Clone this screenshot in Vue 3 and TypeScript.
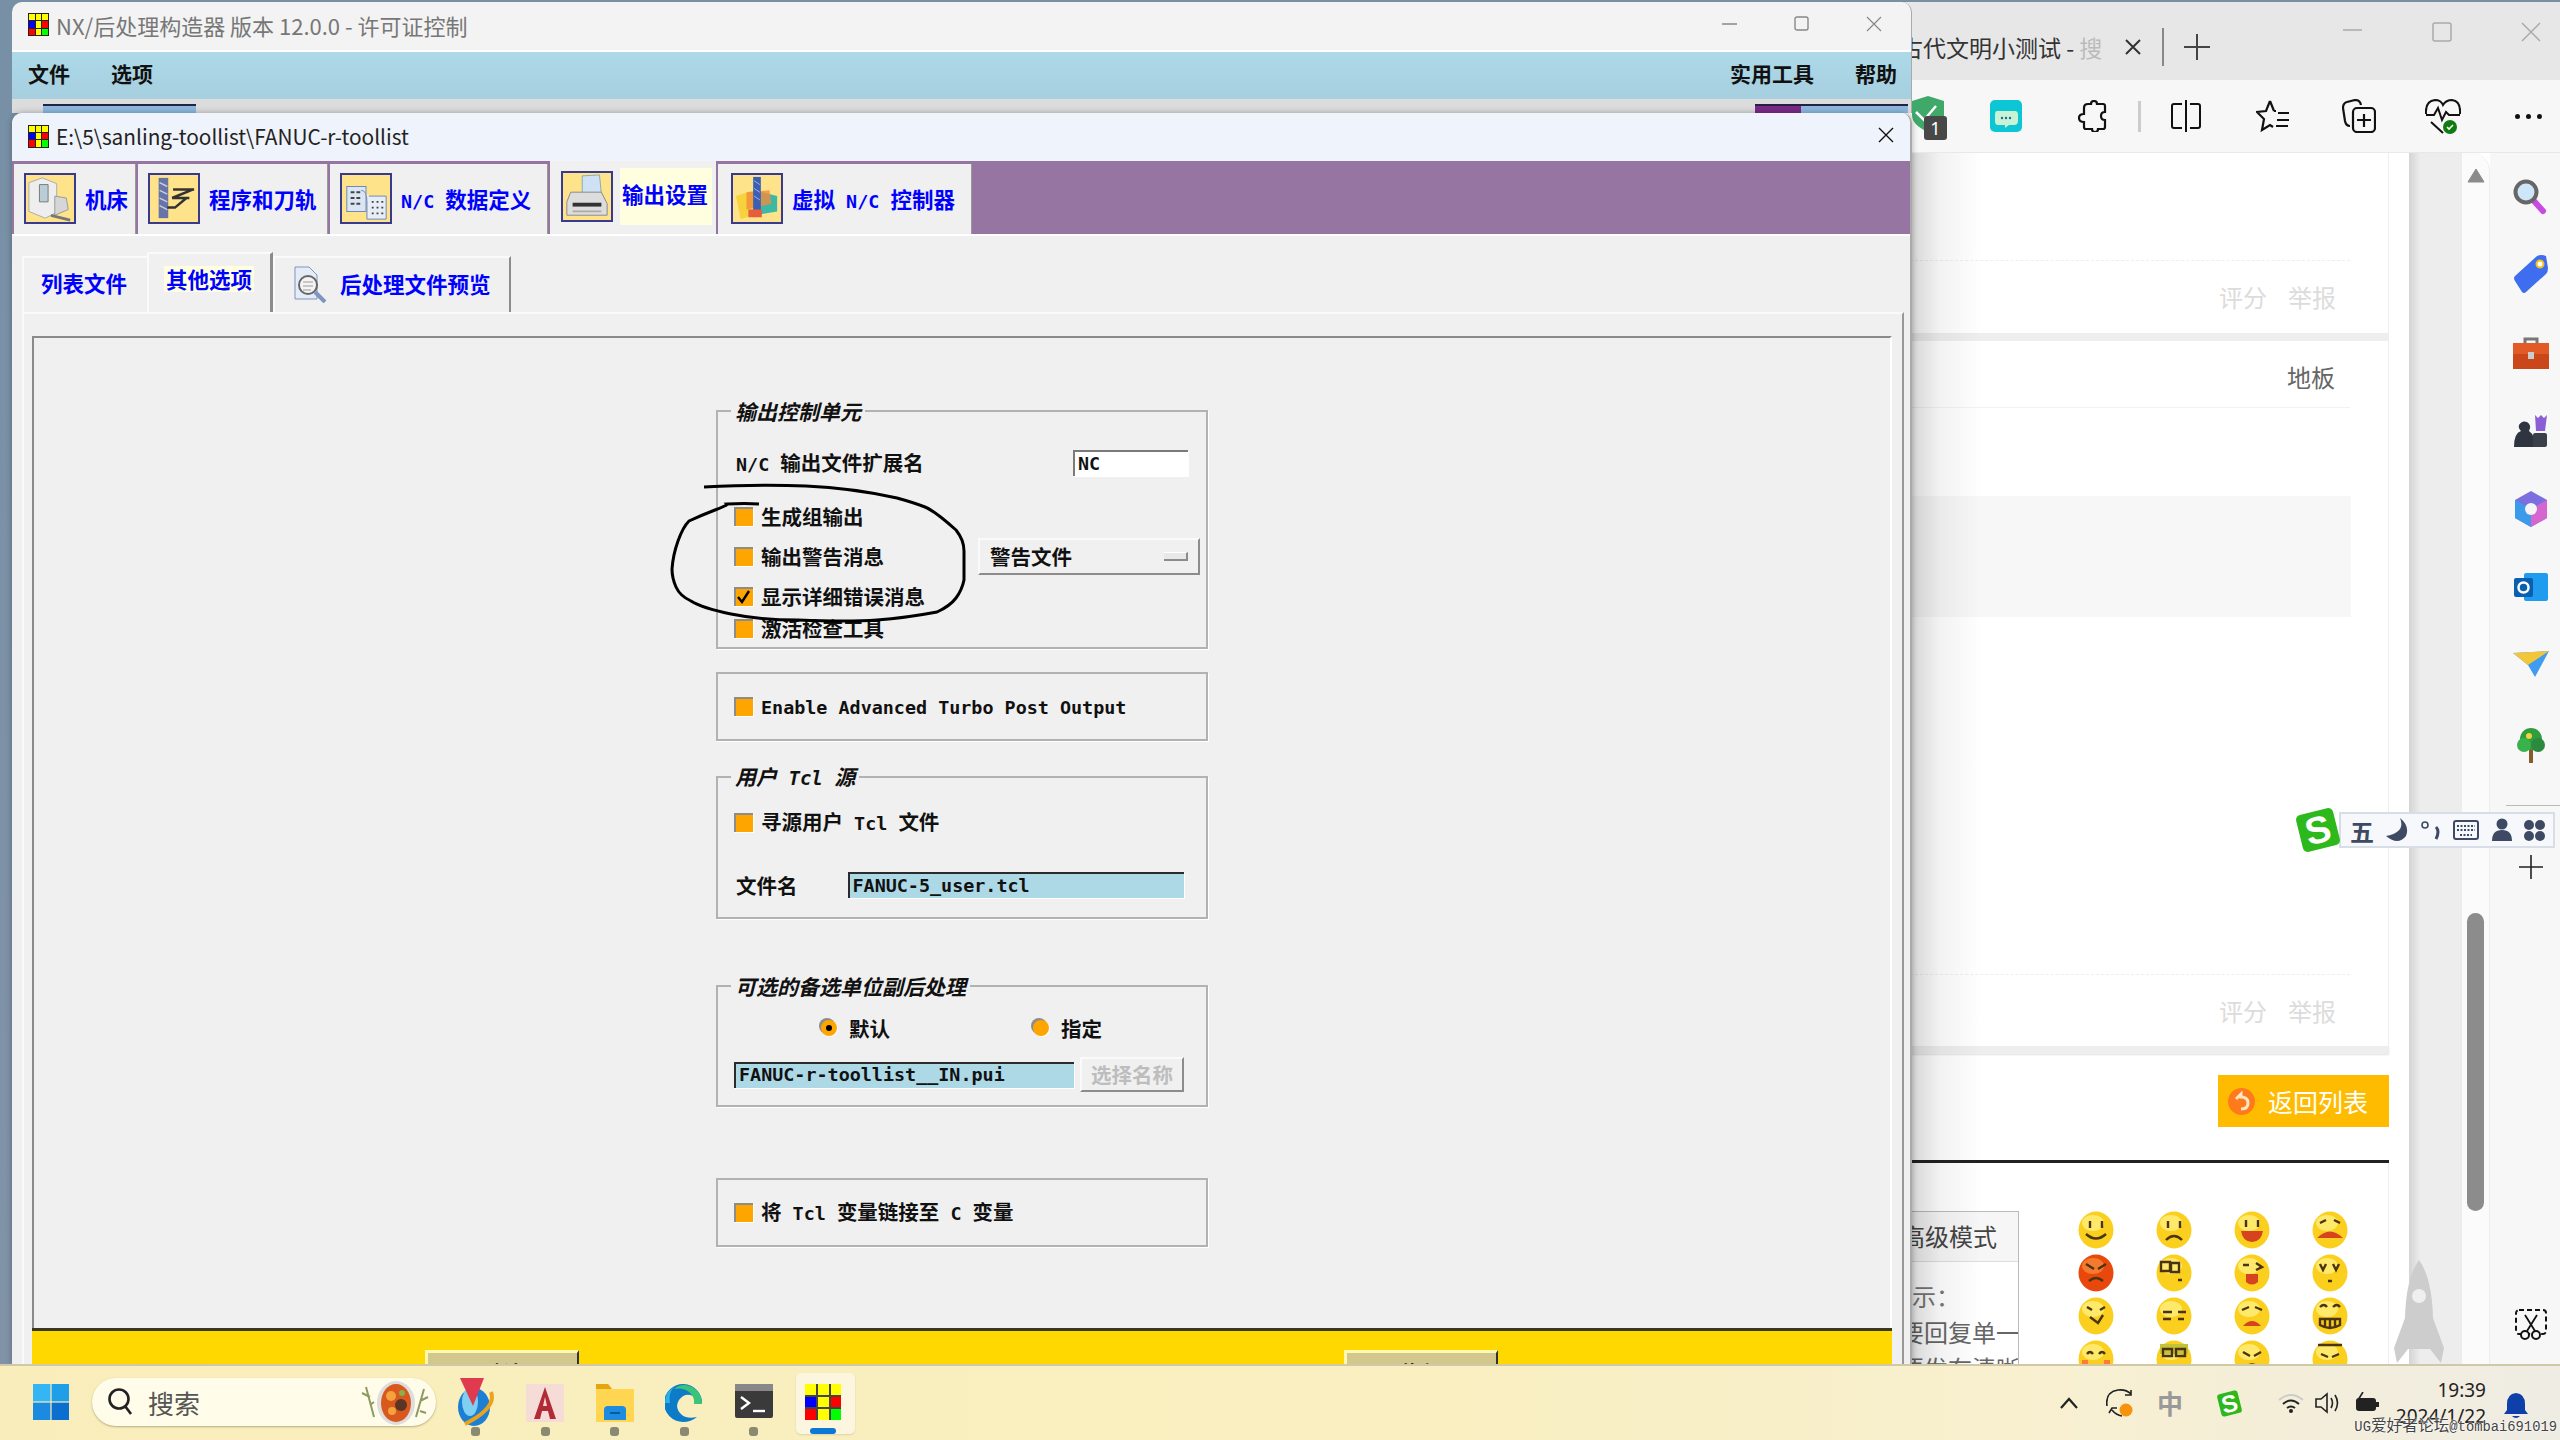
<script setup lang="ts">
const nxCells = ['#ff0', '#ff0', '#ff0', '#00f', '#ff0', '#f00', '#f00', '#ff0', '#0f0']

interface Emoji { d: string; m?: string; red?: boolean }
const emojis: Emoji[] = [
  { d: 'M12 10v7M24 10v7M8 23q10 9 20 0' },
  { d: 'M12 10v7M24 10v7M10 29q8-8 16 0' },
  { d: 'M12 9v7M24 9v7', m: 'M7 20h22q-2 11-11 11T7 20z' },
  { d: 'M8 12l6-3M22 9l6 3', m: 'M5 27q13-13 26 0z' },
  { d: 'M8 10l8 5M28 10l-8 5M11 27q7-6 14 0', red: true },
  { d: 'M5 8h9v9H5zM15 9h8v9h-8zM22 26h4' },
  { d: 'M9 11h6M22 9l6 4-6 3', m: 'M12 20h12v8q-6 5-12 0z' },
  { d: 'M8 10l3 6 3-6M21 10l3 6 3-6M16 27h4' },
  { d: 'M9 10l5 3M22 13l5-3M12 20l8 6 5-8' },
  { d: 'M7 15h9M22 15h8M7 22h8M22 22h6' },
  { d: 'M8 13l7-3M21 10l7 3', m: 'M9 29q9-10 18 0z' },
  { d: 'M8 10q4-4 7 0M21 10q4-4 7 0M8 22h20v6q-10 6-20 0zM13 22v7M18 22v8M23 22v7' },
  { d: 'M9 14q3-4 6 0M21 14q3-4 6 0', m: 'M4 20h6v5H4zM26 20h6v5h-6z' },
  { d: 'M7 9h9v7H7zM20 9h9v7h-9z', m: 'M4 4h28v10H4z' },
  { d: 'M9 12l7 4M27 12l-7 4M12 27q6-5 12 0' },
  { d: 'M6 5h24M9 14l7 3M27 14l-7 3M10 27l16 0' }
]
</script>

<template>
  <div class="desktop">
    <!-- browser behind -->
    <section class="browser">
      <header class="b-tabs">
        <span class="b-title">古代文明小测试 - <em>搜</em></span>
        <svg class="b-x" width="18" height="18" viewBox="0 0 18 18"><path d="M2 2l14 14M16 2L2 16" stroke="#333" stroke-width="2"/></svg>
        <i class="b-sep"></i>
        <svg class="b-plus" width="28" height="28" viewBox="0 0 28 28"><path d="M14 1v26M1 14h26" stroke="#444" stroke-width="2"/></svg>
        <div class="b-ctrls">
          <svg width="20" height="20" viewBox="0 0 20 20"><path d="M0 8h19" stroke="#aaa" stroke-width="1.5"/></svg>
          <svg width="20" height="20" viewBox="0 0 20 20"><rect x="1" y="1" width="18" height="18" rx="2" fill="none" stroke="#aaa" stroke-width="1.5"/></svg>
          <svg width="20" height="20" viewBox="0 0 20 20"><path d="M1 1l18 18M19 1L1 19" stroke="#aaa" stroke-width="1.5"/></svg>
        </div>
      </header>
      <nav class="b-tools">
        <div class="shield">
          <svg width="34" height="36" viewBox="0 0 34 36"><path d="M0 5l16-5 16 5v14q0 10-16 17Q0 29 0 19z" fill="#3fa96a"/><path d="M4 16l8 8 12-14" fill="none" stroke="#fff" stroke-width="2.5"/></svg>
          <b class="badge">1</b>
        </div>
        <svg class="t-chat" width="32" height="32" viewBox="0 0 32 32"><rect width="32" height="32" rx="5" fill="#0cc6d6"/><path d="M7 11h18q3 0 3 4v6q0 4-4 4h-5l-4 3v-3H8q-3 0-3-4v-6q0-4 2-4z" fill="#c8f3d4"/><circle cx="12" cy="18" r="1.2" fill="#26a"/><circle cx="16" cy="18" r="1.2" fill="#26a"/><circle cx="20" cy="18" r="1.2" fill="#26a"/></svg>
        <svg class="t-puz" width="30" height="32" viewBox="0 0 30 32"><path d="M11 4h3q0-3 3-3t3 3h6q2 0 2 2v6q-4 0-4 4t4 4v7q0 2-2 2h-5q0 3-3 3t-3-3H9q-2 0-2-2v-5q-5 0-5-4t5-4V8q0-4 4-4z" fill="none" stroke="#111" stroke-width="2.2"/></svg>
        <i class="t-sep"></i>
        <svg class="t-split" width="32" height="34" viewBox="0 0 32 34"><path d="M12 5H4Q2 5 2 7v20q0 2 2 2h8M20 5h8q2 0 2 2v20q0 2-2 2h-8M16 1v32" fill="none" stroke="#111" stroke-width="2"/></svg>
        <svg class="t-fav" width="34" height="34" viewBox="0 0 34 34"><path d="M14 2l4 10M14 2l-4 10-9 1 7 7-2 11 8-5 3 2M18 12h2M22 14h11M21 21h12M20 27h12" fill="none" stroke="#111" stroke-width="2.2"/></svg>
        <svg class="t-col" width="34" height="34" viewBox="0 0 34 34"><path d="M8 27Q4 27 3 22L1 9q0-5 4-6l8-2q5 0 6 5" fill="none" stroke="#111" stroke-width="2.2"/><rect x="11" y="9" width="22" height="24" rx="4" fill="none" stroke="#111" stroke-width="2.2"/><path d="M22 15v13M15 21h14" stroke="#111" stroke-width="2.2"/></svg>
        <svg class="t-heart" width="36" height="36" viewBox="0 0 36 36"><path d="M1 16Q0 3 10 2q6 0 8 5 3-5 9-5 9 1 8 14M1 17h8l4-7 4 12 4-8 3 3h11M6 24l12 11" fill="none" stroke="#111" stroke-width="2"/><circle cx="25" cy="29" r="7" fill="#107c10"/><path d="M22 29l2 2 4-4" fill="none" stroke="#fff" stroke-width="1.6"/></svg>
        <span class="t-dots"><i></i><i></i><i></i></span>
      </nav>
      <div class="b-main">
        <div class="page">
          <div class="fade"></div>
          <div class="post one">
            <div class="acts dotted"><span>评分</span><span>举报</span></div>
          </div>
          <div class="band"></div>
          <div class="post two">
            <div class="floor"><span>地板</span></div>
            <div class="quote"></div>
            <div class="acts dotted late"><span>评分</span><span>举报</span></div>
          </div>
          <div class="band last"></div>
          <div class="backrow">
            <a class="back-btn">
              <svg width="27" height="27" viewBox="0 0 27 27"><circle cx="13.5" cy="13.5" r="13.5" fill="#ff7a1a"/><path d="M8 11l5-5v3q7 0 7 6t-7 6" fill="none" stroke="#ffe7c8" stroke-width="3"/></svg>
              <span>返回列表</span>
            </a>
          </div>
          <div class="reply">
            <div class="mode">
              <div class="mode-head">高级模式</div>
              <p>示：</p>
              <p class="dark">要回复单一</p>
              <p class="dark">要发布清晰</p>
            </div>
            <div class="emojis">
              <svg v-for="(e, i) in emojis" :key="i" width="36" height="38" viewBox="0 0 36 38">
                <ellipse cx="18" cy="19" rx="17.5" ry="18.5" :fill="e.red ? '#e8480c' : '#fbcf1e'"/>
                <ellipse cx="15" cy="12" rx="11" ry="8" :fill="e.red ? '#f47a30' : '#ffe96a'"/>
                <path v-if="e.m" :d="e.m" :fill="i === 13 ? '#c5c23a' : i === 12 ? '#ff7a3a' : '#d8431f'"/>
                <path :d="e.d" fill="none" stroke="#4a3510" stroke-width="2.4"/>
              </svg>
            </div>
          </div>
        </div>
        <div class="gutter"></div>
        <div class="scroller">
          <svg width="18" height="15" viewBox="0 0 18 15"><path d="M9 1l8 13H1z" fill="#8b8b8b" stroke="#8b8b8b" stroke-linejoin="round"/></svg>
          <div class="thumb"></div>
        </div>
        <aside class="side">
          <svg width="36" height="36" viewBox="0 0 36 36"><path d="M21 22l9 10" stroke="#c74be0" stroke-width="6" stroke-linecap="round"/><circle cx="13" cy="13" r="10.5" fill="#cfe6f8" stroke="#666" stroke-width="4"/></svg>
          <svg width="36" height="40" viewBox="0 0 36 40"><path d="M2 22L24 2q4-2 9 0l2 12q0 4-2 6L13 38q-2 2-4 0L2 27q-2-3 0-5z" fill="#3f6df0"/><circle cx="27" cy="10" r="3.5" fill="#fff" stroke="#f2c21a" stroke-width="2"/></svg>
          <svg width="36" height="34" viewBox="0 0 36 34"><path d="M12 7V2h12v5" fill="none" stroke="#777" stroke-width="3"/><rect y="6" width="36" height="12" fill="#e25a26"/><rect y="17" width="36" height="15" fill="#c9471a"/><rect x="15" y="15" width="6" height="7" fill="#ccc"/></svg>
          <svg width="36" height="36" viewBox="0 0 36 36"><path d="M1 34q0-14 7-16-3-3-2-6 3-5 8-3 5 3 2 9 6 4 6 16z" fill="#2e3440"/><path d="M22 2l3 3 3-3 3 3 3-3-2 16H23z" fill="#8a5fd6"/><rect x="20" y="20" width="14" height="14" rx="2" fill="#3b3f49"/></svg>
          <svg width="34" height="36" viewBox="0 0 34 36"><path d="M17 0l16 9v18l-16 9L1 27V9z" fill="#7b6fe0"/><path d="M1 9l16 9v18L1 27z" fill="#3b9bea"/><path d="M33 9L17 18v18l16-9z" fill="#d566cf"/><circle cx="17" cy="18" r="6" fill="#f4f4f4"/></svg>
          <svg width="34" height="32" viewBox="0 0 34 32"><rect x="10" y="2" width="24" height="28" rx="2" fill="#1f9cf0"/><rect y="7" width="19" height="19" rx="2" fill="#0a5fb0"/><circle cx="9.5" cy="16.5" r="5" fill="none" stroke="#fff" stroke-width="2.5"/></svg>
          <svg width="36" height="26" viewBox="0 0 36 26"><path d="M0 2l36-2-14 26-7-12z" fill="#3f9cf0"/><path d="M0 2l15 12 21-14z" fill="#f3c63a"/></svg>
          <svg width="32" height="36" viewBox="0 0 32 36"><path d="M14 22h4v14h-4z" fill="#8a5a2b"/><circle cx="16" cy="12" r="11" fill="#2f9e3e"/><circle cx="9" cy="18" r="7" fill="#37b24d"/><circle cx="23" cy="18" r="7" fill="#2b8a3e"/><circle cx="14" cy="9" r="3" fill="#f2d13a"/></svg>
          <hr />
          <svg class="s-plus" width="24" height="24" viewBox="0 0 24 24"><path d="M12 0v24M0 12h24" stroke="#222" stroke-width="1.6"/></svg>
          <svg class="s-snip" width="32" height="32" viewBox="0 0 32 32"><rect x="1" y="1" width="30" height="24" rx="3" fill="none" stroke="#111" stroke-width="2" stroke-dasharray="5 3"/><path d="M10 6l10 16M22 6L12 22" stroke="#111" stroke-width="1.8"/><circle cx="10" cy="26" r="4" fill="#f7f7f7" stroke="#111" stroke-width="2"/><circle cx="21" cy="26" r="4" fill="#f7f7f7" stroke="#111" stroke-width="2"/></svg>
        </aside>
        <svg class="rocket" width="50" height="105" viewBox="0 0 50 105"><path d="M25 0q13 18 14 58l11 30-3 15-11-14H14L3 103 0 88l11-30Q12 18 25 0z" fill="#cdcdcd"/><circle cx="25" cy="36" r="7" fill="#efefef"/></svg>
      </div>
    </section>

    <!-- sogou IME bar -->
    <div class="ime">
      <div class="ime-s"><span>S</span></div>
      <div class="ime-bar">
        <b>五</b>
        <svg width="22" height="24" viewBox="0 0 22 24"><path d="M14 0q6 14-14 18 12 10 20 0 4-10-6-18z" fill="#3e4a63"/></svg>
        <svg width="20" height="22" viewBox="0 0 20 22"><circle cx="4" cy="6" r="3" fill="none" stroke="#3e4a63" stroke-width="1.6"/><path d="M15 8q4 4 0 12" fill="none" stroke="#3e4a63" stroke-width="3"/></svg>
        <svg width="26" height="20" viewBox="0 0 26 20"><rect x="1" y="1" width="24" height="18" rx="2" fill="none" stroke="#3e4a63" stroke-width="2"/><path d="M4 6h18M4 10h18M7 15h12" stroke="#3e4a63" stroke-width="2" stroke-dasharray="2 1.5"/></svg>
        <svg width="20" height="24" viewBox="0 0 20 24"><circle cx="10" cy="6" r="5.5" fill="#3e4a63"/><path d="M0 23q0-11 10-11t10 11z" fill="#3e4a63"/></svg>
        <svg width="21" height="21" viewBox="0 0 21 21"><g fill="#3e4a63"><circle cx="5" cy="5" r="5"/><circle cx="16" cy="5" r="5"/><circle cx="5" cy="16" r="5"/><circle cx="16" cy="16" r="5"/></g></svg>
      </div>
    </div>

    <!-- NX main window -->
    <section class="nx-main">
      <header class="nx-title">
        <div class="nx-logo"><i v-for="(c, i) in nxCells" :key="i" :style="{ background: c }"></i></div>
        <span>NX/后处理构造器 版本 12.0.0 - 许可证控制</span>
        <div class="nx-ctrls">
          <svg width="16" height="16" viewBox="0 0 16 16"><path d="M0 8h15" stroke="#888" stroke-width="1.4"/></svg>
          <svg width="16" height="16" viewBox="0 0 16 16"><rect x="1" y="1" width="13" height="13" rx="2" fill="none" stroke="#888" stroke-width="1.4"/></svg>
          <svg width="16" height="16" viewBox="0 0 16 16"><path d="M1 1l14 14M15 1L1 15" stroke="#888" stroke-width="1.2"/></svg>
        </div>
      </header>
      <div class="nx-menu">
        <span>文件</span><span>选项</span>
        <span class="push">实用工具</span><span>帮助</span>
      </div>
      <div class="nx-strip">
        <div class="frag"></div>
        <div class="frag right"></div>
      </div>
    </section>

    <!-- post builder window -->
    <section class="pb">
      <header class="pb-title">
        <div class="nx-logo"><i v-for="(c, i) in nxCells" :key="i" :style="{ background: c }"></i></div>
        <span>E:\5\sanling-toollist\FANUC-r-toollist</span>
        <svg class="pb-x" width="16" height="16" viewBox="0 0 16 16"><path d="M1 1l14 14M15 1L1 15" stroke="#111" stroke-width="1.4"/></svg>
      </header>

      <div class="pb-tabs">
        <div class="tab t1">
          <div class="ico"><svg viewBox="0 0 50 49"><path d="M3 8l14-5 15 6v30l-12 6L3 38z" fill="#eee" stroke="#aaa"/><path d="M14 10h9v18h-9z" fill="#b9cdd6" stroke="#777"/><path d="M30 22l12 2 2 12-14 6z" fill="#d6d6d6" stroke="#999"/><path d="M26 42l20 5" stroke="#777" stroke-width="3"/></svg></div>
          <span>机床</span>
        </div>
        <div class="tab t2">
          <div class="ico"><svg viewBox="0 0 50 49"><rect x="9" y="3" width="10" height="42" fill="#6674a8"/><path d="M10 8l8 4M10 16l8 4M10 24l8 4M10 32l8 4" stroke="#ccd" stroke-width="1.5"/><path d="M24 15h22M23 24l22-9M23 24h18M38 24l-12 10h-8" fill="none" stroke="#333" stroke-width="2.6"/></svg></div>
          <span>程序和刀轨</span>
        </div>
        <div class="tab t3">
          <div class="ico"><svg viewBox="0 0 50 49"><rect x="5" y="12" width="20" height="26" fill="#dbe6f5" stroke="#6c86b8"/><path d="M20 16q6 0 6 12v18h20V22H28" fill="#e8eef8" stroke="#6c86b8"/><path d="M9 18h4M15 18h4M9 24h4M15 24h4M9 30h4M15 30h4M31 28h2M36 28h2M41 28h2M31 34h2M36 34h2M41 34h2M31 40h2M36 40h2M41 40h2" stroke="#444" stroke-width="2"/></svg></div>
          <span><span class="lat">N/C </span>数据定义</span>
        </div>
        <div class="tab t4">
          <div class="ico"><svg viewBox="0 0 50 49"><path d="M20 3l18-1 2 20H20z" fill="#cfe1f4" stroke="#8aa"/><path d="M8 20h32l6 12v12H4V30z" fill="#ddd" stroke="#888"/><rect x="10" y="31" width="30" height="4" fill="#333"/><path d="M10 40h30" stroke="#aaa" stroke-width="2"/></svg></div>
          <span class="lit">输出设置</span>
        </div>
        <div class="tab t5">
          <div class="ico"><svg viewBox="0 0 50 49"><path d="M3 22l19-6v26L8 46z" fill="#f6d23c"/><path d="M22 16l24 6v16L22 42z" fill="#3db8a6"/><path d="M14 18l24-2 2 14-26 6z" fill="#f38b3c" opacity=".8"/><rect x="21" y="2" width="8" height="36" fill="#3b5fb5"/><path d="M22 6l6 4M22 14l6 4M22 22l6 4" stroke="#9fb5e0"/><path d="M16 36h14v8H16z" fill="#e85c3c"/></svg></div>
          <span>虚拟<span class="lat"> N/C </span>控制器</span>
        </div>
      </div>

      <div class="pb-subtabs">
        <div class="sub s1">列表文件</div>
        <div class="sub s2"><span>其他选项</span></div>
        <div class="sub s3">
          <svg width="36" height="38" viewBox="0 0 36 38"><path d="M2 2h14l8 8v24H2z" fill="#e4ecf7" stroke="#7f95bd"/><circle cx="15" cy="20" r="9" fill="#f4f4f4" stroke="#666" stroke-width="2"/><path d="M10 17h10M10 21h10M10 25h8" stroke="#9a9a9a"/><path d="M22 27l10 10" stroke="#7f95bd" stroke-width="4"/></svg>
          <span>后处理文件预览</span>
        </div>
      </div>

      <div class="frame">
        <div class="sunken">
          <div class="column">
            <fieldset class="fs f1">
              <legend>输出控制单元</legend>
              <div class="row ext">
                <span class="lb plain"><span class="lat">N/C </span>输出文件扩展名</span>
                <div class="input white"><span class="lat">NC</span></div>
              </div>
              <div class="row check first"><i class="cb"></i><span class="lb">生成组输出</span></div>
              <div class="row check">
                <i class="cb"></i><span class="lb">输出警告消息</span>
                <div class="drop"><span class="lb">警告文件</span><i></i></div>
              </div>
              <div class="row check">
                <i class="cb on"><svg width="15" height="15" viewBox="0 0 15 15"><path d="M2 8l4 5 7-11" fill="none" stroke="#000" stroke-width="2.4"/></svg></i>
                <span class="lb">显示详细错误消息</span>
              </div>
              <div class="row check tail"><i class="cb"></i><span class="lb">激活检查工具</span></div>
            </fieldset>

            <div class="box b1">
              <i class="cb"></i><span class="lb"><span class="lat">Enable Advanced Turbo Post Output</span></span>
            </div>

            <fieldset class="fs f3">
              <legend>用户<span class="lat"> Tcl </span>源</legend>
              <div class="row src"><i class="cb"></i><span class="lb">寻源用户<span class="lat"> Tcl </span>文件</span></div>
              <div class="row file">
                <span class="lb plain">文件名</span>
                <div class="input blue wide"><span class="lat">FANUC-5_user.tcl</span></div>
              </div>
            </fieldset>

            <fieldset class="fs f4">
              <legend>可选的备选单位副后处理</legend>
              <div class="row radios">
                <i class="rd on"></i><span class="lb">默认</span>
                <i class="rd two"></i><span class="lb">指定</span>
              </div>
              <div class="row pui">
                <div class="input blue pname"><span class="lat">FANUC-r-toollist__IN.pui</span></div>
                <div class="pick">选择名称</div>
              </div>
            </fieldset>

            <div class="box b2">
              <i class="cb"></i><span class="lb">将<span class="lat"> Tcl </span>变量链接至<span class="lat"> C </span>变量</span>
            </div>
          </div>
        </div>
        <div class="yellow">
          <div class="ybtn left">默认</div>
          <div class="ybtn">恢复</div>
        </div>
      </div>
    </section>

    <!-- hand drawn circle -->
    <svg class="ink" width="320" height="150" viewBox="664 480 320 150">
      <path d="M704 487Q760 484 806 486T897 498Q915 503 925 507T956 530Q964 540 964 551T964 580Q962 590 956 598T937 612Q905 618 877 620T798 620Q760 620 731 614T691 601Q680 596 676 587T672 569Q673 555 678 541T689 521Q702 515 715 510T727 504Q745 503 759 504" fill="none" stroke="#000" stroke-width="3"/>
    </svg>

    <!-- taskbar -->
    <footer class="taskbar">
      <svg class="win" width="36" height="36" viewBox="0 0 36 36"><rect width="17.4" height="17.4" fill="#35b5f3"/><rect x="18.6" width="17.4" height="17.4" fill="#1f9fe8"/><rect y="18.6" width="17.4" height="17.4" fill="#1a8be0"/><rect x="18.6" y="18.6" width="17.4" height="17.4" fill="#0b6fd0"/></svg>
      <div class="search">
        <svg width="26" height="30" viewBox="0 0 26 30"><circle cx="12" cy="12" r="9.5" fill="none" stroke="#222" stroke-width="2.6"/><path d="M18 19l6 8" stroke="#222" stroke-width="2.6"/></svg>
        <span>搜索</span>
        <svg class="plate" width="72" height="44" viewBox="0 0 72 44"><path d="M6 6l8 30M64 8l-8 28M2 12l8 4M10 24l4-3M68 16l-8 4M60 30l6 2" stroke="#8d9a63" stroke-width="2" fill="none"/><ellipse cx="36" cy="22" rx="19" ry="22" fill="#ddd"/><ellipse cx="36" cy="22" rx="15" ry="19" fill="#d8581e"/><circle cx="31" cy="15" r="5" fill="#f5a13c"/><circle cx="41" cy="24" r="6" fill="#5a3424"/><circle cx="32" cy="30" r="4" fill="#f5a13c"/><circle cx="42" cy="12" r="3" fill="#88b04b"/></svg>
      </div>
      <div class="apps">
        <div class="app">
          <svg width="38" height="60" viewBox="0 0 38 60"><ellipse cx="17" cy="33" rx="16" ry="19" fill="#1d7fd4"/><ellipse cx="13" cy="28" rx="8" ry="14" fill="#7fd0f2"/><path d="M3 4l24 0-11 28z" fill="#e03a4e"/><path d="M34 18q6 16-26 32" fill="none" stroke="#eda21c" stroke-width="4"/></svg>
          <i></i>
        </div>
        <div class="app">
          <svg width="38" height="38" viewBox="0 0 38 38"><rect width="38" height="38" fill="#f6dcd6"/><path d="M19 3L8 35h6l2-8h6l2 8h6zM17 22l2-9 2 9z" fill="#b22a37"/></svg>
          <i></i>
        </div>
        <div class="app">
          <svg width="38" height="38" viewBox="0 0 38 38"><path d="M0 0h12l4 5h22v33H0z" fill="#ffd552"/><path d="M0 0h12l4 5H0z" fill="#e3a512"/><path d="M8 26q0-4 4-4h14q4 0 4 4v10H8z" fill="#1d8be0"/><path d="M14 29h10" stroke="#0a5aa0" stroke-width="2"/></svg>
          <i></i>
        </div>
        <div class="app">
          <svg width="38" height="38" viewBox="0 0 38 38"><path d="M37 20A19 19 0 1 0 18 38q8 0 14-5-10 2-15-2-8-7-3-15 6-8 14-4 8 4 9 8z" fill="#0c7bc8"/><path d="M37 20q0-12-10-17T9 5q9-2 15 3 6 5 5 12z" fill="#3bc37a"/><path d="M0 19Q0 8 9 3 3 9 5 19z" fill="#2bb0e8"/></svg>
          <i></i>
        </div>
        <div class="app">
          <svg width="38" height="34" viewBox="0 0 38 34"><rect width="38" height="34" rx="2" fill="#3a3a3a"/><rect width="38" height="7" fill="#888"/><path d="M6 13l8 6-8 6" fill="none" stroke="#fff" stroke-width="2.4"/><path d="M18 27h12" stroke="#fff" stroke-width="2.4"/></svg>
          <i></i>
        </div>
        <div class="app active">
          <div class="nx-logo big"><i v-for="(c, i) in nxCells" :key="i" :style="{ background: c }"></i></div>
          <i></i>
        </div>
      </div>
      <div class="tray">
        <svg width="20" height="12" viewBox="0 0 20 12"><path d="M2 11l8-9 8 9" fill="none" stroke="#222" stroke-width="2.2"/></svg>
        <div class="sync">
          <svg width="28" height="28" viewBox="0 0 28 28"><path d="M1 17Q-1 3 12 1q8-1 13 4M25 1v5h-6M3 24l3-5h5M6 21q4 5 10 6" fill="none" stroke="#222" stroke-width="1.6"/><circle cx="20" cy="21" r="6.5" fill="#f7920a"/></svg>
        </div>
        <div class="ime-tray"><span>中</span></div>
        <div class="s-tray"><span>S</span></div>
        <svg width="26" height="20" viewBox="0 0 26 20"><path d="M1 7q12-10 24 0" fill="none" stroke="#ccc" stroke-width="2"/><path d="M5 11q8-7 16 0M9 15q4-3 8 0" fill="none" stroke="#222" stroke-width="2"/><circle cx="13" cy="18" r="2" fill="#222"/></svg>
        <svg width="26" height="22" viewBox="0 0 26 22"><path d="M1 7h5l6-5v18l-6-5H1z" fill="none" stroke="#222" stroke-width="1.6"/><path d="M16 6q3 5 0 10M20 3q5 8 0 16" fill="none" stroke="#222" stroke-width="1.6"/></svg>
        <svg width="26" height="22" viewBox="0 0 26 22"><rect x="2" y="6" width="20" height="13" rx="3" fill="#222"/><rect x="22" y="10" width="3" height="5" fill="#222"/><path d="M9 0L4 8h5l-3 6" fill="none" stroke="#222" stroke-width="1.6"/></svg>
        <div class="clock"><span>19:39</span><span>2024/1/22</span></div>
        <svg class="bell" width="24" height="26" viewBox="0 0 24 26"><path d="M12 0q9 1 9 11v6l3 4H0l3-4v-6Q3 1 12 0z" fill="#0f3fa8"/><path d="M8 23q4 4 8 0z" fill="#0f3fa8"/></svg>
      </div>
      <div class="mark">UG<span>爱好者论坛</span>@tombai691019</div>
    </footer>
  </div>
</template>

<style>
html, body { margin: 0; background: #7a93a8; overflow: hidden; }
</style>

<style scoped>
.desktop {
  position: relative;
  width: 2560px;
  height: 1440px;
  overflow: hidden;
  background: linear-gradient(#7790a6, #8293a8);
  font-family: "Noto Sans CJK SC", "Noto Sans", sans-serif;
}
i { display: block; font-style: normal; }

/* ---------- browser ---------- */
.browser {
  position: absolute;
  left: 1900px;
  top: 2px;
  width: 660px;
  height: 1362px;
  display: flex;
  flex-direction: column;
  background: #fff;
}
.b-tabs {
  height: 78px;
  background: #e7e7e7;
  display: flex;
  align-items: center;
  flex: none;
  position: relative;
  padding-top: 12px;
  box-sizing: border-box;
}
.b-title { font-size: 23px; color: #333; font-weight: 400; width: 224px; white-space: nowrap; overflow: hidden; }
.b-title em { font-style: normal; color: #bbb; }
.b-sep { width: 2px; height: 38px; background: #888; margin-left: 20px; }
.b-plus { margin-left: 19px; }
.b-ctrls { position: absolute; top: 20px; left: 443px; display: flex; gap: 69px; }
.b-tools {
  height: 73px;
  flex: none;
  background: #f7f7f7;
  display: flex;
  align-items: center;
  position: relative;
  box-sizing: border-box;
  border-bottom: 1px solid #e8e8e8;
}
.shield { position: relative; margin-left: 12px; width: 36px; height: 36px; margin-top: -5px; }
.badge {
  position: absolute; left: 12px; top: 20px; width: 23px; height: 24px; background: #484848;
  border-radius: 3px; color: #fff; font: 400 18px "Noto Sans", sans-serif; text-align: center; line-height: 24px;
}
.t-chat { margin-left: 42px; }
.t-puz { margin-left: 55px; }
.t-sep { width: 3px; height: 31px; background: #ccc; margin-left: 31px; }
.t-split { margin-left: 29px; }
.t-fav { margin-left: 54px; }
.t-col { margin-left: 52px; }
.t-heart { margin-left: 49px; }
.t-dots { display: flex; gap: 6px; margin-left: 54px; }
.t-dots i { width: 5px; height: 5px; border-radius: 50%; background: #111; }

.b-main { flex: 1; display: flex; min-height: 0; position: relative; }
.page {
  width: 509px;
  flex: none;
  position: relative;
  background: #fff;
  overflow: hidden;
}
.fade {
  position: absolute; left: 12px; top: 0; bottom: 0; width: 70px;
  background: linear-gradient(90deg, rgba(0,0,0,.16), rgba(0,0,0,.05) 40%, rgba(0,0,0,0));
  z-index: 3;
}
.post { width: 489px; box-sizing: border-box; border-right: 1px solid #eee; }
.post.one { height: 180px; padding-top: 107px; }
.post.two { height: 705px; }
.acts {
  width: 450px; box-sizing: border-box; display: flex; justify-content: flex-end; gap: 21px;
  padding-right: 14px; font-size: 24px; color: #dcdcdc; line-height: 36px; padding-top: 18px;
}
.dotted { border-top: 1px dashed #eee; }
.acts.late { margin-top: 357px; }
.band { width: 489px; height: 8px; background: #eee; }
.band.last { box-shadow: 0 1px 2px rgba(0,0,0,.12); }
.floor { width: 450px; height: 67px; box-sizing: border-box; border-bottom: 1px solid #f2f2f2; display: flex; justify-content: flex-end; padding: 16px 15px 0 0; font-size: 24px; color: #666; line-height: 40px; }
.quote { width: 451px; height: 121px; margin-top: 88px; background: #f7f7f7; }
.backrow { width: 489px; display: flex; justify-content: flex-end; padding-top: 21px; box-sizing: border-box; border-bottom: 3px solid #222; height: 109px; }
.back-btn {
  width: 171px; height: 52px; background: #ffbb00; display: flex; align-items: center; color: #fff;
  font-size: 25px; padding-left: 10px; box-sizing: border-box; gap: 13px;
}
.reply { width: 489px; height: 210px; box-sizing: border-box; border-right: 1px solid #eee; display: flex; padding-top: 48px; }
.mode { width: 119px; height: 160px; box-sizing: border-box; border: 1px solid #bbb; border-left: 0; background: #fff; overflow: hidden; flex: none; margin-right: 38px; font-size: 24px; color: #777; }
.mode-head { height: 49px; background: #f6f6f6; border-bottom: 1px solid #ddd; line-height: 48px; color: #444; white-space: nowrap; direction: rtl; text-align: right; padding-right: 21px; }
.mode p { margin: 0; white-space: nowrap; line-height: 36px; }
.mode p:first-of-type { margin-top: 16px; padding-left: 12px; }
.mode p.dark { margin-left: -12px; padding-left: 12px; color: #666; }
.emojis { display: grid; grid-template-columns: repeat(4, 78px); grid-auto-rows: 43px; justify-items: center; }
.gutter { width: 53px; flex: none; background: linear-gradient(90deg, #d4d4d4, #ededed 22%, #ededed); }
.rocket { position: absolute; left: 494px; top: 1107px; z-index: 2; }
.scroller {
  width: 28px; flex: none; background: #fbfbfb; border-top-right-radius: 18px; box-sizing: border-box;
  display: flex; flex-direction: column; align-items: center; padding-top: 15px;
  border-right: 1px solid #eee;
}
.thumb { width: 17px; height: 298px; background: #8c8c8c; border-radius: 9px; margin-top: 730px; }
.side { width: 70px; flex: none; background: #f7f7f7; display: flex; flex-direction: column; align-items: center; padding: 26px 0 0 12px; box-sizing: border-box; position: relative; }
.side svg { flex: none; }
.side svg:nth-child(2) { margin-top: 39px; }
.side svg:nth-child(3) { margin-top: 43px; }
.side svg:nth-child(4) { margin-top: 42px; }
.side svg:nth-child(5) { margin-top: 42px; }
.side svg:nth-child(6) { margin-top: 44px; }
.side svg:nth-child(7) { margin-top: 48px; }
.side svg:nth-child(8) { margin-top: 50px; }
.side hr { width: 54px; margin: 42px 0 0 4px; border: 0; border-top: 1px solid #bbb; flex: none; }
.side .s-plus { margin-top: 49px; }
.side .s-snip { margin-top: 430px; }

/* ---------- IME ---------- */
.ime { position: absolute; left: 2299px; top: 811px; display: flex; align-items: center; z-index: 8; }
.ime-s, .s-tray {
  background: #2db81b; color: #fff; font: 900 38px "Liberation Sans", sans-serif; transform: rotate(-14deg);
  width: 38px; height: 38px; border-radius: 5px; display: flex; align-items: center; justify-content: center; z-index: 2;
}
.ime-bar {
  width: 216px; height: 36px; margin-left: 2px; background: #f6f8fb; border: 2px solid #d7dee8; box-sizing: border-box;
  display: flex; align-items: center; justify-content: space-between; padding: 0 8px 0 9px;
}
.ime-bar b { font-size: 24px; color: #3e4a63; font-weight: 700; }

/* ---------- NX main ---------- */
.nx-main {
  position: absolute; left: 12px; top: 2px; width: 1900px; height: 111px; background: #f3f3f3;
  border-radius: 10px 10px 0 0; border-right: 1px solid #aaa; box-sizing: border-box; display: flex; flex-direction: column; overflow: hidden;
}
.nx-title { display: flex; align-items: center; padding: 0 0 3px 16px; gap: 7px; color: #777; font-size: 22px; position: relative; flex: none; border-bottom: 2px solid #fff; box-sizing: content-box; height: 45px; }
.nx-logo { display: grid; grid-template-columns: repeat(3, 1fr); gap: 1px; width: 21px; height: 23px; background: #222; padding: 1px; box-sizing: border-box; flex: none; }
.nx-logo.big { width: 36px; height: 36px; background: #444; gap: 2px; padding: 0; }
.nx-ctrls { position: absolute; left: 1710px; top: 14px; display: flex; gap: 56px; }
.nx-menu {
  height: 47px; flex: none; background: linear-gradient(#add9e8, #a6cfdf); display: flex; align-items: center; padding: 0 14px 5px 16px;
  font-size: 21px; font-weight: 700; color: #111; gap: 41px; box-sizing: border-box;
}
.nx-menu .push { margin-left: auto; }
.nx-strip { flex: 1; background: #dcdcdc; position: relative; display: flex; justify-content: space-between; padding: 5px 3px 0 31px; }
.frag { width: 153px; height: 9px; background: #8db8de; border-top: 2px solid #224; box-sizing: border-box; }
.frag.right { background: linear-gradient(90deg, #7a2a86 30%, #8db8de 30%); }

/* ---------- post builder ---------- */
.pb {
  position: absolute; left: 12px; top: 113px; width: 1900px; height: 1251px; background: #f0f0f0;
  border-radius: 10px 10px 0 0; box-sizing: border-box; border-right: 2px solid #aaa; display: flex; flex-direction: column; overflow: hidden; z-index: 4;
  box-shadow: 0 0 6px rgba(0,0,0,.3);
}
.pb-title { height: 48px; flex: none; background: #eff3fb; display: flex; align-items: center; padding: 0 0 2px 16px; gap: 7px; font-size: 20.8px; color: #222; position: relative; box-sizing: border-box; }
.pb-x { position: absolute; right: 16px; top: 14px; }
.pb-tabs { height: 73px; flex: none; background: #9775a2; display: flex; align-items: flex-end; gap: 2px; padding-left: 2px; border-bottom: 2px solid #fff; box-sizing: content-box; }
.tab {
  height: 70px; background: #f0f0f0; display: flex; align-items: center; box-sizing: border-box; padding: 0 0 2px 10px; gap: 9px;
  color: #00f; font-size: 21.5px; font-weight: 700; white-space: nowrap; border-right: 1px solid #999;
}
.t1 { width: 122px; } .t2 { width: 190px; } .t3 { width: 218px; }
.t4 { width: 166px; height: 73px; padding-left: 11px; border-right: 0; }
.t5 { width: 254px; padding-left: 13px; }
.ico { width: 52px; height: 51px; background: #ffe38a; border: 2px solid #3a3a8c; box-sizing: border-box; flex: none; }
.ico svg { display: block; width: 100%; height: 100%; }
.lit { background: #ffffdf; height: 57px; line-height: 52px; box-shadow: 4px 0 0 #ffffdf, -2px 0 0 #ffffdf; }
.lat { font-family: "DejaVu Sans Mono", monospace; font-size: 18.4px; font-weight: 700; white-space: pre; }
.pb-subtabs { height: 76px; flex: none; display: flex; align-items: flex-end; padding-left: 10px; }
.sub {
  height: 56px; display: flex; align-items: center; box-sizing: border-box; color: #00f; font-size: 21.5px; font-weight: 700;
  border-top: 2px solid #fafafa; border-left: 2px solid #fafafa; border-right: 2px solid #8c8c8c; white-space: nowrap; padding-bottom: 5px;
}
.s1 { width: 125px; padding-left: 17px; border-right: 0; }
.s2 { width: 126px; height: 60px; padding-left: 15px; border-right-width: 3px; padding-bottom: 8px; }
.s2 span { background: #ffffdf; line-height: 26px; padding: 0 2px; }
.s3 { width: 238px; padding-left: 18px; gap: 11px; padding-bottom: 3px; }
.frame {
  flex: 1; margin: 0 6px 0 10px; border-top: 2px solid #fafafa; border-right: 2px solid #999; border-left: 2px solid #fafafa;
  box-sizing: border-box; padding: 22px 10px 0 8px; display: flex; flex-direction: column; min-height: 0;
}
.sunken { height: 992px; flex: none; border-top: 2px solid #8a8a8a; border-left: 2px solid #8a8a8a; border-right: 2px solid #fff; box-sizing: border-box; }
.column { width: 492px; margin-left: 682px; padding-top: 58px; }
.yellow { flex: 1; background: #ffd800; border-top: 3px solid #3a3620; display: flex; padding: 19px 0 0 393px; gap: 765px; overflow: hidden; }
.ybtn {
  width: 154px; height: 44px; background: #d2c88e; border-top: 3px solid #fff8b0; border-left: 3px solid #fff8b0; border-right: 2px solid #333;
  box-sizing: border-box; text-align: center; font-size: 20px; font-weight: 700; line-height: 40px; color: #111; flex: none;
}

.fs { margin: 0; padding: 0 0 0 16px; border: 2px solid #b2b2b2; box-sizing: border-box; width: 492px; min-width: 0; box-shadow: 1px 1px 0 #fff; }
.fs legend {
  font-size: 21px; font-weight: 700; font-style: italic; line-height: 30px; padding: 0 4px; margin-left: -3px; color: #111; white-space: nowrap;
}
.fs legend .lat { font-size: 19px; font-style: italic; }
.row { display: flex; align-items: center; }
.lb { font-size: 20.5px; font-weight: 700; color: #111; white-space: nowrap; line-height: 1; }
.lb.plain { margin-left: 2px; }
.cb {
  width: 19px; height: 19px; background: #ffa500; box-sizing: border-box; border-top: 2px solid #8c8c8c; border-left: 2px solid #8c8c8c;
  box-shadow: 1px 1px 0 #fff; margin-right: 8px; flex: none; position: relative;
}
.cb.on svg { position: absolute; left: 0; top: 0; }
.ext { height: 26px; margin-top: 24px; justify-content: space-between; padding-right: 18px; }
.check { height: 40px; }
.check.first { margin-top: 20px; }
.check.tail { height: 25px; margin-bottom: 6px; }
.input { box-sizing: border-box; height: 26px; border-top: 2px solid #7a7a7a; border-left: 2px solid #7a7a7a; box-shadow: 1px 1px 0 #fff; padding-left: 3px; display: flex; align-items: center; color: #111; }
.input .lat { line-height: 1; }
.white { width: 115px; background: #fff; }
.blue { background: #add8e6; border-color: #2b2b2b; }
.wide { width: 336px; margin-left: 50px; }
.drop {
  width: 222px; height: 37px; margin-left: 94px; box-sizing: border-box; border-top: 2px solid #fafafa; border-left: 2px solid #fafafa;
  border-right: 2px solid #8c8c8c; border-bottom: 2px solid #8c8c8c; display: flex; align-items: center; justify-content: space-between; padding: 0 10px;
}
.drop i { width: 24px; height: 9px; background: #e8e8e8; border-bottom: 2px solid #8c8c8c; border-right: 2px solid #8c8c8c; border-top: 1px solid #fff; box-sizing: border-box; }
.box { width: 492px; height: 69px; box-sizing: border-box; border: 2px solid #b2b2b2; box-shadow: 1px 1px 0 #fff; display: flex; align-items: center; padding-left: 16px; }
.b1 { margin-top: 23px; }
.f3 { margin-top: 20px; padding-bottom: 19px; }
.src { height: 30px; margin-top: 14px; }
.file { height: 26px; margin-top: 35px; }
.f4 { margin-top: 52px; padding-bottom: 13px; }
.radios { height: 26px; margin-top: 14px; padding-left: 87px; }
.rd { width: 16px; height: 16px; border-radius: 50%; background: #ffa500; margin-right: 12px; box-shadow: -2px -2px 0 #8c8c8c, 1px 1px 0 #fff; flex: none; position: relative; }
.rd.on::after { content: ""; position: absolute; left: 5px; top: 5px; width: 6px; height: 6px; background: #000; border-radius: 50%; }
.rd.two { margin-left: 143px; }
.pui { margin-top: 16px; gap: 6px; height: 35px; }
.pname { width: 340px; }
.pick {
  width: 104px; height: 35px; box-sizing: border-box; border-top: 2px solid #fafafa; border-left: 2px solid #fafafa; border-right: 2px solid #8c8c8c; border-bottom: 2px solid #8c8c8c;
  color: #bdbdbd; font-size: 20.5px; font-weight: 700; text-align: center; line-height: 31px; white-space: nowrap;
}
.b2 { margin-top: 71px; }

.ink { position: absolute; left: 664px; top: 480px; z-index: 6; }

/* ---------- taskbar ---------- */
.taskbar {
  position: absolute; left: 0; bottom: 0; width: 2560px; height: 76px; z-index: 7; box-sizing: border-box;
  background: linear-gradient(90deg, #f9eebb 0%, #f9efc0 55%, #f8f0d0 80%, #efece4 100%);
  border-top: 2px solid #cfc9a8; display: flex;
}
.win { position: absolute; left: 33px; top: 18px; }
.search {
  position: absolute; left: 92px; top: 12px; width: 344px; height: 48px; border-radius: 24px; background: #fffce9;
  box-shadow: 0 1px 2px rgba(120,110,60,.5); display: flex; align-items: center; padding-left: 15px; box-sizing: border-box; gap: 15px;
  font-size: 26px; color: #555;
}
.plate { position: absolute; right: 4px; top: 3px; }
.apps { position: absolute; left: 441px; top: 0; display: flex; }
.app { width: 69.5px; height: 74px; display: flex; flex-direction: column; align-items: center; position: relative; padding-top: 18px; box-sizing: border-box; }
.app > i { position: absolute; top: 61px; width: 9px; height: 9px; border-radius: 3px; background: #8a8a72; }
.app:first-child { padding-top: 8px; }
.app.active::before { content: ""; position: absolute; left: 7px; top: 7px; width: 59px; height: 61px; background: #fbf6dd; border-radius: 5px; box-shadow: 0 1px 2px rgba(0,0,0,.12); }
.app.active .nx-logo { position: relative; }
.app.active > i { width: 26px; height: 6px; background: #0b78d6; top: 62px; z-index: 1; }
.tray { position: absolute; left: 2059px; top: 0; width: 475px; height: 74px; display: flex; align-items: center; }
.tray > svg, .tray > div { flex: none; }
.tray > svg:nth-child(1) { margin-right: 27px; }
.sync { margin-right: 23px; display: flex; }
.ime-tray { margin-right: 38px; width: 24px; text-align: center; font-size: 26px; color: #999; font-weight: 700; line-height: 1; }
.s-tray { width: 21px; height: 23px; font-size: 24px; border-radius: 3px; margin-right: 38px; }
.tray > svg:nth-child(5) { margin-right: 11px; }
.tray > svg:nth-child(6) { margin-right: 13px; }
.clock { width: 100px; margin-left: 6px; display: flex; flex-direction: column; align-items: flex-end; font-size: 19px; line-height: 26px; color: #222; font-family: "Noto Sans", sans-serif; }
.bell { position: absolute; left: 445px; top: 27px; }
.mark {
  position: absolute; right: 3px; bottom: 2px; font: 400 13.8px "Liberation Mono", monospace; color: #444; line-height: 20px;
  text-shadow: 0 0 2px #fff, 0 0 2px #fff;
}
.mark span { font: 400 15.7px "Noto Sans CJK SC", sans-serif; }
</style>
